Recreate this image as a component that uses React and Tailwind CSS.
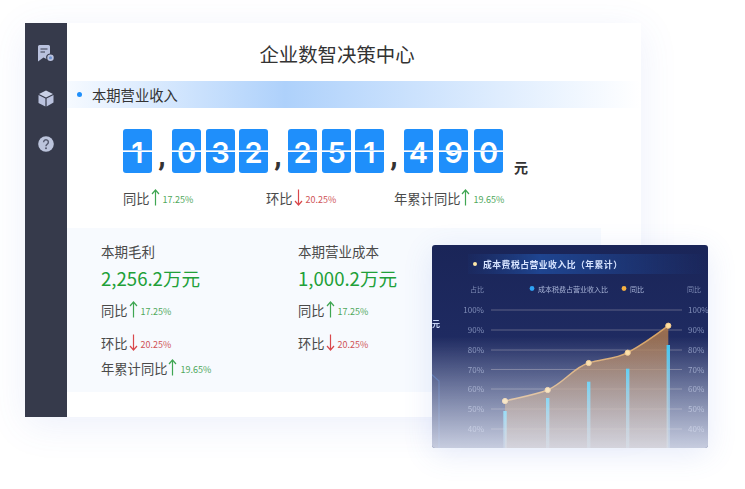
import React from "react";

const cjk = "font-['Noto_Sans_CJK_SC','Noto_Sans',sans-serif]";

function Arrow({ up }) {
  const color = up ? "#3fa652" : "#d9484c";
  return (
    <svg width="9" height="17" viewBox="0 0 9 17" fill="none" stroke={color} strokeWidth="1.2" className="shrink-0">
      {up ? <path d="M4.5 16.5V1M1 5l3.5-4L8 5" /> : <path d="M4.5 .5V16M1 12l3.5 4L8 12" />}
    </svg>
  );
}

function Stat({ label, up, value, className = "" }) {
  return (
    <div className={`flex items-end ${className}`}>
      <span className="text-[13.3px] leading-[18px] text-[#4a4a4a]">{label}</span>
      <span className="ml-[1px] mb-[2px]"><Arrow up={up} /></span>
      <span className={`ml-[3px] text-[9px] leading-[16px] ${up ? "text-[#4fa85c]" : "text-[#cf5357]"}`}>{value}</span>
    </div>
  );
}

function Digit({ d, className = "" }) {
  return (
    <div className={`relative w-[29px] h-[44px] flex flex-col justify-between ${className}`}>
      <div className="h-[21px] rounded-t-[3px] bg-[#1f8ffb]" />
      <div className="h-[21px] rounded-b-[3px] bg-[#1f8ffb]" />
      <div className="absolute inset-0 pt-[2px] flex items-center justify-center text-white font-semibold text-[29px] leading-none font-['Inter',sans-serif]">{d}</div>
      <div className="absolute left-0 right-0 top-[21px] h-px bg-[#b8d9fc]" />
    </div>
  );
}

function Comma() {
  return <div className="w-[20px] h-[44px] flex items-end justify-center text-[30px] leading-[34px] font-bold text-[#333] font-['Roboto',sans-serif]">,</div>;
}

function DocIcon() {
  return (
    <svg width="16" height="17" viewBox="0 0 16 17" fill="#bac2de">
      <path d="M1.5 0h9A1.5 1.5 0 0 1 12 1.5v7a4 4 0 0 0-3.6 5.6L5.5 12.6 0 16.5V1.5A1.5 1.5 0 0 1 1.5 0z" />
      <path d="M2.5 4h7M2.5 7h4.5" stroke="#363a4b" strokeWidth="1.1" />
      <circle cx="12.5" cy="12.8" r="2.4" fill="#6f93d2" stroke="#bac2de" strokeWidth="1.7" />
    </svg>
  );
}

function CubeIcon() {
  return (
    <svg width="16" height="17" viewBox="0 0 16 17" fill="#c9d0e6">
      <path d="M8 .4l7 3.6L8 7.6 1 4z" />
      <path d="M.5 5l6.9 3.6v8L.5 13z" fill="#bac2de" />
      <path d="M15.5 5L8.6 8.6v8l6.9-4z" fill="#bac2de" />
    </svg>
  );
}

function HelpIcon() {
  return (
    <svg width="16" height="16" viewBox="0 0 16 16">
      <circle cx="8" cy="8" r="7.8" fill="#bcc4dc" />
      <path d="M5.6 6.2a2.4 2.4 0 1 1 3.7 2C8.4 8.8 8 9.2 8 10.2" fill="none" stroke="#565b70" strokeWidth="1.5" />
      <circle cx="8" cy="12.3" r="1" fill="#565b70" />
    </svg>
  );
}

const gridLines = [
  ["100%", 65], ["90%", 85], ["80%", 105], ["70%", 124.5], ["60%", 144], ["50%", 164], ["40%", 184],
];
const points = [[73, 156], [115.7, 145], [156.7, 118], [195.7, 107.7], [236.3, 80.7]];
const bars = [[73, 166], [115.7, 153], [156.7, 136.7], [195.7, 123.7], [236.3, 100]];

function ChartCard() {
  const line = "M73 156C90 152 102 150 115.7 145C132 138 142 122 156.7 118C170 114 184 114 195.7 107.7C210 100 224 90 236.3 80.7";
  return (
    <div className={`absolute left-[432px] top-[245px] w-[276px] h-[203px] rounded-[3px] overflow-hidden bg-gradient-to-b from-[#1a2558] via-[#1f2b62] to-[#2a3a72] shadow-[0_6px_30px_rgba(80,110,220,0.14)] ${cjk}`}>
      <svg width="276" height="203" viewBox="0 0 276 203" fontFamily="'Noto Sans CJK SC', sans-serif" className="blur-[0.4px]">
        <defs>
          <linearGradient id="band" x1="0" x2="1" y1="0" y2="0">
            <stop offset="0" stopColor="#1d3f85" stopOpacity="0.1" />
            <stop offset="0.3" stopColor="#1f4590" />
            <stop offset="1" stopColor="#1f4590" stopOpacity="0" />
          </linearGradient>
          <linearGradient id="area" x1="0" x2="0" y1="80" y2="203" gradientUnits="userSpaceOnUse">
            <stop offset="0" stopColor="#b07a4c" stopOpacity="0.85" />
            <stop offset="1" stopColor="#a9805f" stopOpacity="0.55" />
          </linearGradient>
          <linearGradient id="bar" x1="0" x2="0" y1="0" y2="1">
            <stop offset="0" stopColor="#35c6f5" />
            <stop offset="1" stopColor="#9fdcf5" stopOpacity="0.3" />
          </linearGradient>
          <linearGradient id="fade" x1="0" x2="0" y1="0" y2="1">
            <stop offset="0" stopColor="#eef1fa" stopOpacity="0" />
            <stop offset="0.45" stopColor="#eef1fa" stopOpacity="0" />
            <stop offset="1" stopColor="#eef1fa" stopOpacity="0.8" />
          </linearGradient>
        </defs>
        <rect x="36" y="9" width="240" height="20" fill="url(#band)" />
        <circle cx="43" cy="19" r="2" fill="#ffe9a8" />
        <text x="51" y="22.5" fontSize="8.8" fontWeight="700" letterSpacing="0.5" fill="#d7e4ff">成本费税占营业收入比（年累计）</text>

        <text x="38" y="47" fontSize="7" fill="#7f8cb6">占比</text>
        <circle cx="100" cy="43.5" r="2.4" fill="#2ea3f5" />
        <text x="106" y="46.5" fontSize="7" fill="#a9b5d8">成本税费占营业收入比</text>
        <circle cx="192" cy="43.5" r="2.4" fill="#f5b041" />
        <text x="198" y="46.5" fontSize="7" fill="#a9b5d8">同比</text>
        <text x="255" y="47" fontSize="7" fill="#7f8cb6">同比</text>

        <text x="0" y="82" fontSize="8" fontWeight="700" fill="#c8d6f5">元</text>
        <path d="M-2 128L7 136V203" fill="none" stroke="#2c4f99" strokeWidth="1.2" />

        {gridLines.map(([label, y]) => (
          <g key={label}>
            <line x1="59" x2="250" y1={y} y2={y} stroke="#8a88a0" strokeOpacity="0.6" strokeWidth="1" />
            <text x="52" y={y + 3} fontSize="8" textAnchor="end" fill="#7f8cb6">{label}</text>
            <text x="256" y={y + 3} fontSize="8" fill="#7f8cb6">{label}</text>
          </g>
        ))}

        <path d={`${line}V203H73Z`} fill="url(#area)" />
        {bars.map(([x, y]) => (
          <rect key={x} x={x - 1.7} y={y} width="3.4" height={203 - y} fill="url(#bar)" />
        ))}
        <path d={line} fill="none" stroke="#d9a566" strokeWidth="1.5" />
        {points.map(([x, y]) => (
          <circle key={x} cx={x} cy={y} r="2.6" fill="#ffdf9e" stroke="#f3c98c" strokeWidth="1" />
        ))}
        <rect x="0" y="0" width="276" height="203" fill="url(#fade)" />
      </svg>
    </div>
  );
}

export default function App() {
  return (
    <div className={`relative w-[745px] h-[489px] overflow-hidden bg-white pl-[25px] pt-[23px] ${cjk}`}>
      <div className="flex w-[616px] h-[394px] bg-white shadow-[0_8px_36px_rgba(80,110,220,0.1)]">
        <aside className="w-[42px] shrink-0 bg-[#363a4b] flex flex-col items-center pt-[22px] gap-[28px]">
          <DocIcon />
          <CubeIcon />
          <div className="mt-[1px]"><HelpIcon /></div>
        </aside>

        <main className="flex-1 flex flex-col">
          <h1 className="text-center text-[19.4px] leading-[26px] mt-[18px] text-[#333] font-normal pr-[34px]">企业数智决策中心</h1>

          <div className="mt-[14px] h-[27px] flex items-center pl-[10px] bg-gradient-to-r from-[#f6faff] via-[#aed1fb] via-38% to-white">
            <span className="w-[5px] h-[5px] rounded-full bg-[#1f8ffb]" />
            <span className="ml-[10px] text-[14.3px] text-[#333]">本期营业收入</span>
          </div>

          <div className="mt-[21px] pl-[56px] flex items-start">
            <Digit d="1" />
            <Comma />
            <Digit d="0" />
            <Digit d="3" className="ml-[5px]" />
            <Digit d="2" className="ml-[4px]" />
            <Comma />
            <Digit d="2" />
            <Digit d="5" className="ml-[5px]" />
            <Digit d="1" className="ml-[4px]" />
            <Comma />
            <Digit d="4" />
            <Digit d="9" className="ml-[6px]" />
            <Digit d="0" className="ml-[6px]" />
            <span className="ml-[11px] mt-[29px] text-[14px] leading-[18px] font-bold text-[#333]">元</span>
          </div>

          <div className="mt-[13px] pl-[56px] flex">
            <Stat className="w-[143px]" label="同比" up value="17.25%" />
            <Stat className="w-[128px]" label="环比" value="20.25%" />
            <Stat label="年累计同比" up value="19.65%" />
          </div>

          <div className="mt-[20px] w-[534px] h-[164px] bg-[#f7fafe] pl-[34px] pt-[14px] flex">
            <div className="w-[197px]">
              <div className="text-[13.5px] leading-[18px] text-[#4a4a4a]">本期毛利</div>
              <div className="mt-[5px] text-[18.6px] leading-[26px] text-[#21a038]">2,256.2万元</div>
              <Stat className="mt-[10px]" label="同比" up value="17.25%" />
              <Stat className="mt-[14px]" label="环比" value="20.25%" />
              <Stat className="mt-[6px]" label="年累计同比" up value="19.65%" />
            </div>
            <div>
              <div className="text-[13.5px] leading-[18px] text-[#4a4a4a]">本期营业成本</div>
              <div className="mt-[5px] text-[18.6px] leading-[26px] text-[#21a038]">1,000.2万元</div>
              <Stat className="mt-[10px]" label="同比" up value="17.25%" />
              <Stat className="mt-[14px]" label="环比" value="20.25%" />
            </div>
          </div>
        </main>
      </div>

      <ChartCard />
    </div>
  );
}
